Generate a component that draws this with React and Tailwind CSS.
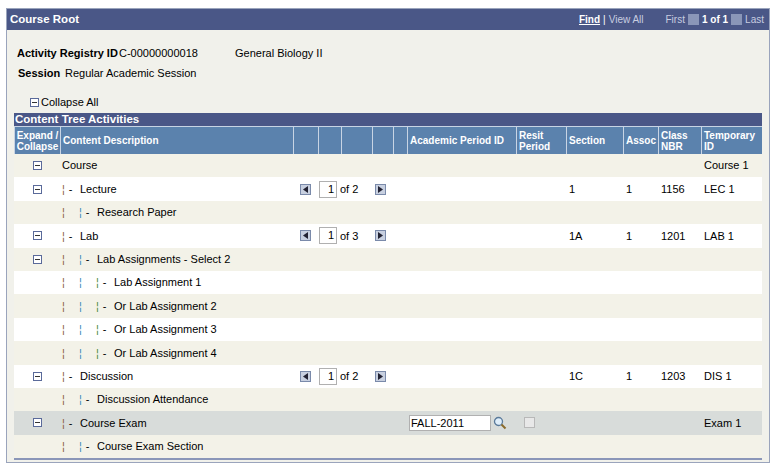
import React from 'react'

const F = { fontFamily: '"Liberation Sans", Arial, sans-serif' }
const guideColors = ['text-[#8a5a3a]', 'text-[#3a8ab8]', 'text-[#4a8a3a]']

const rows = [
  { label: 'Course', lvl: 0, btn: true, temp: 'Course 1' },
  { label: 'Lecture', lvl: 1, btn: true, pager: 'of 2', section: '1', assoc: '1', nbr: '1156', temp: 'LEC 1' },
  { label: 'Research Paper', lvl: 2 },
  { label: 'Lab', lvl: 1, btn: true, pager: 'of 3', section: '1A', assoc: '1', nbr: '1201', temp: 'LAB 1' },
  { label: 'Lab Assignments - Select 2', lvl: 2, btn: true },
  { label: 'Lab Assignment 1', lvl: 3 },
  { label: 'Or Lab Assignment 2', lvl: 3 },
  { label: 'Or Lab Assignment 3', lvl: 3 },
  { label: 'Or Lab Assignment 4', lvl: 3 },
  { label: 'Discussion', lvl: 1, btn: true, pager: 'of 2', section: '1C', assoc: '1', nbr: '1203', temp: 'DIS 1' },
  { label: 'Discussion Attendance', lvl: 2 },
  { label: 'Course Exam', lvl: 1, btn: true, exam: true, temp: 'Exam 1' },
  { label: 'Course Exam Section', lvl: 2 },
]

const cols = 'grid-cols-[46px_233px_25px_23px_31px_21px_14px_109px_50px_57px_35px_43px_61px]'

function Minus() {
  return (
    <span className="inline-flex w-[9px] h-[9px] border border-[#5a6a9a] bg-white items-center justify-center">
      <span className="w-[5px] h-px bg-[#333]" />
    </span>
  )
}

function Arrow({ dir }) {
  return (
    <span className="inline-flex w-[11px] h-[11px] bg-[#c8d0e0] border border-[#7a8aaa] items-center justify-center">
      <svg width="5" height="7" viewBox="0 0 5 7">
        <path d={dir === 'l' ? 'M5 0 L0 3.5 L5 7Z' : 'M0 0 L5 3.5 L0 7Z'} fill="#223" />
      </svg>
    </span>
  )
}

function Guides({ lvl }) {
  const items = []
  for (let i = 0; i < lvl; i++) {
    const last = i === lvl - 1
    items.push(
      <span key={i} className="inline-block w-[17px]">
        <span className={guideColors[i % 3]}>¦</span>
        {last && <span className="ml-[4px]">-</span>}
      </span>
    )
  }
  return <>{items}</>
}

export default function App() {
  return (
    <div className="w-[778px] h-[471px] bg-white pt-[8px] pl-[6px] text-[11px] text-black" style={F}>
      <div className="w-[764px] h-[455px] border border-[#9aa4bc] bg-[#f1f1eb]">
        <div className="h-[21px] bg-[#4a5787] flex items-center justify-between px-[3px] text-white">
          <span className="font-bold text-[11.5px]">Course Root</span>
          <div className="flex items-center text-[10px] text-[#c8cde0] pr-[2px]">
            <span className="underline font-bold text-white">Find</span>
            <span className="mx-[3px] text-white">|</span>
            <span>View All</span>
            <span className="ml-[22px]">First</span>
            <span className="w-[11px] h-[11px] bg-[#8a96b8] mx-[3px]" />
            <span className="font-bold text-white">1 of 1</span>
            <span className="w-[11px] h-[11px] bg-[#8a96b8] mx-[3px]" />
            <span>Last</span>
          </div>
        </div>
        <div className="pt-[16px] pl-[10px] flex items-center h-[30px]">
          <span className="font-bold w-[102px]">Activity Registry ID</span>
          <span className="w-[116px]">C-00000000018</span>
          <span>General Biology II</span>
        </div>
        <div className="pl-[11px] flex items-center h-[14px] mt-[6px]">
          <span className="font-bold w-[47px]">Session</span>
          <span>Regular Academic Session</span>
        </div>
        <div className="pl-[23px] mt-[15px] flex items-center gap-[2px] h-[14px]">
          <Minus />
          <span>Collapse All</span>
        </div>
        <div className="ml-[7px] mt-[4px] w-[748px]">
          <div className="h-[13px] bg-[#4a5787] text-white font-bold text-[11.5px] leading-[13px] pl-[1px]">Content Tree Activities</div>
          <div className={`grid ${cols} h-[28px] bg-[#5b82ad] text-white font-bold text-[10px] leading-[11px]`}>
            {['Expand / Collapse', 'Content Description', '', '', '', '', '', 'Academic Period ID', 'Resit Period', 'Section', 'Assoc', 'Class NBR', 'Temporary ID'].map((h, i) => (
              <div key={i} className={`border-l border-[#c8d4e4] border-t flex items-center px-[2px] ${i === 0 ? 'text-center justify-center' : ''}`}>{h}</div>
            ))}
          </div>
          {rows.map((r, i) => (
            <div
              key={i}
              className={`grid ${cols} h-[23.4px] items-center ${r.exam ? 'bg-[#d8dcda]' : i % 2 === 0 ? 'bg-[#f3f2e8]' : 'bg-white'}`}
            >
              <div className="flex justify-center">{r.btn && <Minus />}</div>
              <div className="pl-[2px] flex items-center whitespace-nowrap">
                <Guides lvl={r.lvl} />
                <span className={r.lvl ? 'ml-[1px]' : ''}>{r.label}</span>
              </div>
              <div className="col-span-5 flex items-center pl-[7px]">
                {r.pager && (
                  <>
                    <Arrow dir="l" />
                    <span className="ml-[8px] w-[18px] h-[17px] border border-[#b0b0b0] bg-white text-right pr-[2px] leading-[15px]">1</span>
                    <span className="ml-[3px] w-[35px]">{r.pager}</span>
                    <Arrow dir="r" />
                  </>
                )}
              </div>
              <div className="flex items-center pl-[2px]">
                {r.exam && (
                  <>
                    <span className="w-[82px] h-[16px] border border-[#b0b0b0] bg-white leading-[14px] pl-[1px]">FALL-2011</span>
                    <svg width="14" height="14" viewBox="0 0 14 14" className="ml-[2px]">
                      <circle cx="5.5" cy="5.5" r="4" fill="#dfeefa" stroke="#5a7a9a" strokeWidth="1.3" />
                      <path d="M8.5 8.5 L12.5 12.5" stroke="#8a6a2a" strokeWidth="2" />
                    </svg>
                  </>
                )}
              </div>
              <div className="pl-[6px]">
                {r.exam && <span className="block w-[11px] h-[11px] border border-[#b8b8b8] bg-[#e8e8e8] ml-[2px]" />}
              </div>
              <div className="pl-[3px]">{r.section}</div>
              <div className="pl-[3px]">{r.assoc}</div>
              <div className="pl-[3px]">{r.nbr}</div>
              <div className="pl-[3px]">{r.temp}</div>
            </div>
          ))}
          <div className="h-[2px] bg-[#8a96b8]" />
        </div>
      </div>
    </div>
  )
}
